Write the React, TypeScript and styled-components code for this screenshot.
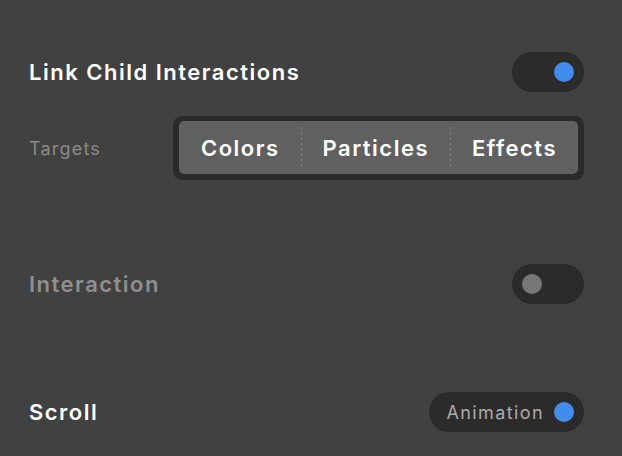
import styled, { createGlobalStyle } from "styled-components";

const GlobalStyle = createGlobalStyle`
  html, body {
    margin: 0;
    padding: 0;
    background: #414141;
  }
  body {
    font-family: Inter, "Noto Sans", "Liberation Sans", sans-serif;
    -webkit-font-smoothing: antialiased;
  }
`;

const Panel = styled.div`
  width: 622px;
  height: 456px;
  box-sizing: border-box;
  padding: 52px 38px 0 29px;
  display: flex;
  flex-direction: column;
  background: #414141;
  overflow: hidden;
`;

const Row = styled.div<{ $top?: number }>`
  display: flex;
  align-items: center;
  justify-content: space-between;
  margin-top: ${({ $top = 0 }) => $top}px;
`;

const Title = styled.span<{ $muted?: boolean }>`
  font-size: 22px;
  font-weight: 600;
  letter-spacing: 1.5px;
  color: ${({ $muted }) => ($muted ? "#8f8f8f" : "#ffffff")};
`;

const Label = styled.span`
  font-size: 18px;
  letter-spacing: 1.2px;
  color: #8a8a8a;
`;

const Track = styled.div<{ $on: boolean }>`
  width: 72px;
  height: 40px;
  box-sizing: border-box;
  border-radius: 20px;
  background: #2b2b2b;
  display: flex;
  align-items: center;
  justify-content: ${({ $on }) => ($on ? "flex-end" : "flex-start")};
  padding: 0 10px;
`;

const Knob = styled.span<{ $on: boolean }>`
  width: 20px;
  height: 20px;
  border-radius: 50%;
  background: ${({ $on }) => ($on ? "#448ceb" : "#777777")};
`;

const LabeledTrack = styled(Track)`
  width: auto;
  gap: 10px;
  padding: 0 10px 0 17px;
`;

const TrackText = styled.span`
  font-size: 18px;
  color: #ababab;
  letter-spacing: 1.4px;
`;

const Segmented = styled.div`
  display: flex;
  padding: 5px 6px 6px;
  border-radius: 9px;
  background: #2a2a2a;
`;

const SegmentInner = styled.div`
  display: flex;
  height: 53px;
  border-radius: 5px;
  background: #606060;
`;

const Segment = styled.button<{ $divider?: boolean }>`
  position: relative;
  border: none;
  background: transparent;
  font-family: inherit;
  font-size: 22px;
  font-weight: 600;
  letter-spacing: 1.5px;
  color: #ffffff;
  padding: 0 21px 0 22px;
  cursor: pointer;
  &::before {
    content: "";
    display: ${({ $divider }) => ($divider ? "block" : "none")};
    position: absolute;
    left: 0;
    top: 6px;
    bottom: 7px;
    border-left: 1px dashed #7a7a7a;
  }
`;

const Toggle = ({ on }: { on: boolean }) => (
  <Track $on={on}>
    <Knob $on={on} />
  </Track>
);

export default function App() {
  return (
    <>
      <GlobalStyle />
      <Panel>
        <Row>
          <Title>Link Child Interactions</Title>
          <Toggle on />
        </Row>
        <Row $top={24}>
          <Label>Targets</Label>
          <Segmented>
            <SegmentInner>
              <Segment>Colors</Segment>
              <Segment $divider>Particles</Segment>
              <Segment $divider>Effects</Segment>
            </SegmentInner>
          </Segmented>
        </Row>
        <Row $top={84}>
          <Title $muted>Interaction</Title>
          <Toggle on={false} />
        </Row>
        <Row $top={88}>
          <Title>Scroll</Title>
          <LabeledTrack $on>
            <TrackText>Animation</TrackText>
            <Knob $on />
          </LabeledTrack>
        </Row>
      </Panel>
    </>
  );
}
